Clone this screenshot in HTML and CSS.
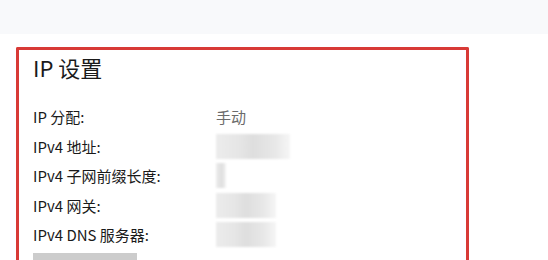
FILE: index.html
```html
<!DOCTYPE html>
<html lang="zh-CN">
<head>
    <meta charset="UTF-8">
    <title>IP 设置</title>
    <link rel="stylesheet" href="styles.css">
</head>
<body>
    <div class="topbar"></div>
    <div class="page">
        <div class="card">
            <h1>IP 设置</h1>
            <div class="rows">
                <div class="row">
                    <span class="label">IP 分配:</span>
                    <span class="value">手动</span>
                </div>
                <div class="row">
                    <span class="label">IPv4 地址:</span>
                    <span class="blur blur-addr"></span>
                </div>
                <div class="row">
                    <span class="label">IPv4 子网前缀长度:</span>
                    <span class="blur blur-prefix"></span>
                </div>
                <div class="row">
                    <span class="label">IPv4 网关:</span>
                    <span class="blur blur-gw"></span>
                </div>
                <div class="row">
                    <span class="label">IPv4 DNS 服务器:</span>
                    <span class="blur blur-dns"></span>
                </div>
            </div>
            <div class="edit-button"></div>
        </div>
    </div>
</body>
</html>
```

FILE: styles.css
```css
body {
    margin: 0;
    height: 260px;
    font-family: "Noto Sans CJK SC", "Noto Sans", sans-serif;
    background: #ffffff;
    color: #1a1a1a;
    overflow: hidden;
}

.topbar {
    height: 34px;
    background: #f8f9fb;
}

.page {
    padding: 13px 0 0 16px;
}

.card {
    width: 453px;
    height: 213px;
    overflow: hidden;
    border: 3px solid #d83a36;
    border-bottom: none;
    border-radius: 2px 2px 0 0;
    padding: 0 0 0 14px;
    box-sizing: border-box;
}

h1 {
    margin: 2px 0 0;
    font-size: 22px;
    font-weight: 400;
    line-height: 30px;
}

.rows {
    margin-top: 20px;
}

.row {
    display: flex;
    align-items: center;
    height: 29.5px;
    font-size: 15px;
}

.label {
    width: 183px;
}

.value {
    color: #6b6b6b;
}

.blur {
    display: block;
    height: 25px;
    background: linear-gradient(90deg, #ececec 0%, #e6e6e6 30%, #dedede 50%, #e8e8e8 80%, #f6f6f6 100%);
    filter: blur(1px);
}

.blur-addr {
    width: 74px;
}

.blur-prefix {
    width: 10px;
}

.blur-gw {
    width: 60px;
}

.blur-dns {
    width: 60px;
}

.edit-button {
    margin-top: 3px;
    width: 104px;
    height: 20px;
    background: #cccccc;
}
```
